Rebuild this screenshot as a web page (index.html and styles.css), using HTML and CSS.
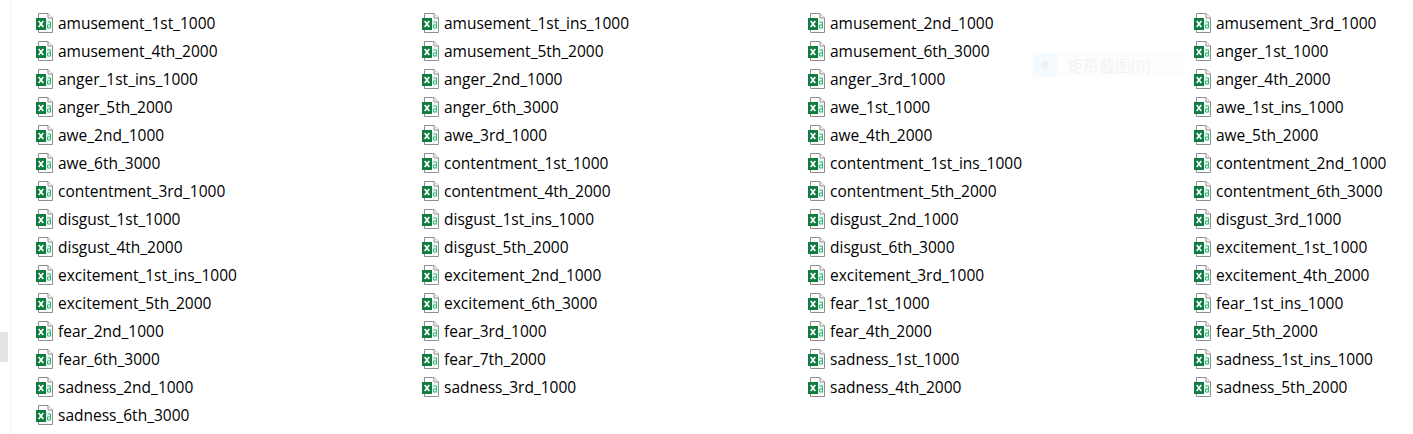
FILE: index.html
```html
<!DOCTYPE html>
<html>
  <head>
    <meta charset="utf-8" />
    <title>Files</title>
    <link rel="stylesheet" href="styles.css">
  </head>
  <body>
    <svg class="defs" width="0" height="0">
      <symbol id="xls" viewBox="0 0 18 20">
        <path d="M2.5 0.5H12L16.5 5V19.5H2.5Z" fill="#fff" stroke="#8f8f8f" />
        <path d="M12 0.5V5H16.5" fill="#f6f6f6" stroke="#8f8f8f" />
        <rect x="10" y="6.5" width="5.5" height="10" fill="#e3f5ec" />
        <rect x="0" y="5" width="10" height="12" fill="#107c41" />
        <path d="M2.7 8L7.3 14M7.3 8L2.7 14" stroke="#fff" stroke-width="1.6" />
        <path d="M11.5 9H14.5V15H11.5V12H14.5" fill="none" stroke="#33b77a" />
      </symbol>
    </svg>

    <div class="snip-hint">
      <span class="snip-icon"><span class="snip-dot"></span></span>
      <span class="snip-text">矩形截图(R)</span>
    </div>
    <div class="side-tab"></div>

    <main class="files">
      <div class="file"><svg class="icon"><use href="#xls" /></svg>amusement_1st_1000</div>
      <div class="file"><svg class="icon"><use href="#xls" /></svg>amusement_1st_ins_1000</div>
      <div class="file"><svg class="icon"><use href="#xls" /></svg>amusement_2nd_1000</div>
      <div class="file"><svg class="icon"><use href="#xls" /></svg>amusement_3rd_1000</div>
      <div class="file"><svg class="icon"><use href="#xls" /></svg>amusement_4th_2000</div>
      <div class="file"><svg class="icon"><use href="#xls" /></svg>amusement_5th_2000</div>
      <div class="file"><svg class="icon"><use href="#xls" /></svg>amusement_6th_3000</div>
      <div class="file"><svg class="icon"><use href="#xls" /></svg>anger_1st_1000</div>
      <div class="file"><svg class="icon"><use href="#xls" /></svg>anger_1st_ins_1000</div>
      <div class="file"><svg class="icon"><use href="#xls" /></svg>anger_2nd_1000</div>
      <div class="file"><svg class="icon"><use href="#xls" /></svg>anger_3rd_1000</div>
      <div class="file"><svg class="icon"><use href="#xls" /></svg>anger_4th_2000</div>
      <div class="file"><svg class="icon"><use href="#xls" /></svg>anger_5th_2000</div>
      <div class="file"><svg class="icon"><use href="#xls" /></svg>anger_6th_3000</div>
      <div class="file"><svg class="icon"><use href="#xls" /></svg>awe_1st_1000</div>
      <div class="file"><svg class="icon"><use href="#xls" /></svg>awe_1st_ins_1000</div>
      <div class="file"><svg class="icon"><use href="#xls" /></svg>awe_2nd_1000</div>
      <div class="file"><svg class="icon"><use href="#xls" /></svg>awe_3rd_1000</div>
      <div class="file"><svg class="icon"><use href="#xls" /></svg>awe_4th_2000</div>
      <div class="file"><svg class="icon"><use href="#xls" /></svg>awe_5th_2000</div>
      <div class="file"><svg class="icon"><use href="#xls" /></svg>awe_6th_3000</div>
      <div class="file"><svg class="icon"><use href="#xls" /></svg>contentment_1st_1000</div>
      <div class="file"><svg class="icon"><use href="#xls" /></svg>contentment_1st_ins_1000</div>
      <div class="file"><svg class="icon"><use href="#xls" /></svg>contentment_2nd_1000</div>
      <div class="file"><svg class="icon"><use href="#xls" /></svg>contentment_3rd_1000</div>
      <div class="file"><svg class="icon"><use href="#xls" /></svg>contentment_4th_2000</div>
      <div class="file"><svg class="icon"><use href="#xls" /></svg>contentment_5th_2000</div>
      <div class="file"><svg class="icon"><use href="#xls" /></svg>contentment_6th_3000</div>
      <div class="file"><svg class="icon"><use href="#xls" /></svg>disgust_1st_1000</div>
      <div class="file"><svg class="icon"><use href="#xls" /></svg>disgust_1st_ins_1000</div>
      <div class="file"><svg class="icon"><use href="#xls" /></svg>disgust_2nd_1000</div>
      <div class="file"><svg class="icon"><use href="#xls" /></svg>disgust_3rd_1000</div>
      <div class="file"><svg class="icon"><use href="#xls" /></svg>disgust_4th_2000</div>
      <div class="file"><svg class="icon"><use href="#xls" /></svg>disgust_5th_2000</div>
      <div class="file"><svg class="icon"><use href="#xls" /></svg>disgust_6th_3000</div>
      <div class="file"><svg class="icon"><use href="#xls" /></svg>excitement_1st_1000</div>
      <div class="file"><svg class="icon"><use href="#xls" /></svg>excitement_1st_ins_1000</div>
      <div class="file"><svg class="icon"><use href="#xls" /></svg>excitement_2nd_1000</div>
      <div class="file"><svg class="icon"><use href="#xls" /></svg>excitement_3rd_1000</div>
      <div class="file"><svg class="icon"><use href="#xls" /></svg>excitement_4th_2000</div>
      <div class="file"><svg class="icon"><use href="#xls" /></svg>excitement_5th_2000</div>
      <div class="file"><svg class="icon"><use href="#xls" /></svg>excitement_6th_3000</div>
      <div class="file"><svg class="icon"><use href="#xls" /></svg>fear_1st_1000</div>
      <div class="file"><svg class="icon"><use href="#xls" /></svg>fear_1st_ins_1000</div>
      <div class="file"><svg class="icon"><use href="#xls" /></svg>fear_2nd_1000</div>
      <div class="file"><svg class="icon"><use href="#xls" /></svg>fear_3rd_1000</div>
      <div class="file"><svg class="icon"><use href="#xls" /></svg>fear_4th_2000</div>
      <div class="file"><svg class="icon"><use href="#xls" /></svg>fear_5th_2000</div>
      <div class="file"><svg class="icon"><use href="#xls" /></svg>fear_6th_3000</div>
      <div class="file"><svg class="icon"><use href="#xls" /></svg>fear_7th_2000</div>
      <div class="file"><svg class="icon"><use href="#xls" /></svg>sadness_1st_1000</div>
      <div class="file"><svg class="icon"><use href="#xls" /></svg>sadness_1st_ins_1000</div>
      <div class="file"><svg class="icon"><use href="#xls" /></svg>sadness_2nd_1000</div>
      <div class="file"><svg class="icon"><use href="#xls" /></svg>sadness_3rd_1000</div>
      <div class="file"><svg class="icon"><use href="#xls" /></svg>sadness_4th_2000</div>
      <div class="file"><svg class="icon"><use href="#xls" /></svg>sadness_5th_2000</div>
      <div class="file"><svg class="icon"><use href="#xls" /></svg>sadness_6th_3000</div>
    </main>
  </body>
</html>
```
FILE: styles.css
```css
html,
body {
  height: 100%;
}

body {
  margin: 0;
  background: #fff;
  color: #000;
  font-family: "Open Sans", "Noto Sans CJK SC", sans-serif;
  font-size: 15.5px;
  overflow: hidden;
}

.defs {
  position: absolute;
}

.files {
  display: grid;
  grid-template-columns: repeat(3, 386px) 1fr;
  grid-auto-rows: 28px;
  margin-left: 10px;
  padding: 9px 0 0 25px;
  border-left: 1px solid #f5f5f5;
  height: 100%;
  box-sizing: border-box;
}

.file {
  display: flex;
  align-items: center;
  gap: 4px;
  white-space: nowrap;
}

.icon {
  width: 18px;
  height: 20px;
  flex: none;
}

.side-tab {
  position: absolute;
  left: 0;
  top: 332px;
  width: 8px;
  height: 30px;
  background: #e4e4e4;
}

/* faint screenshot tool hint left over the list */
.snip-hint {
  position: absolute;
  left: 1033px;
  top: 53px;
  width: 153px;
  height: 24px;
  display: flex;
  align-items: center;
  gap: 10px;
  background: #fcfdfe;
}

.snip-icon {
  width: 24px;
  height: 24px;
  display: flex;
  align-items: center;
  justify-content: center;
  background: #f5faff;
}

.snip-dot {
  width: 8px;
  height: 8px;
  border-radius: 50%;
  background: #eef2f7;
}

.snip-text {
  font-size: 16px;
  color: #f1f3f5;
}
```
